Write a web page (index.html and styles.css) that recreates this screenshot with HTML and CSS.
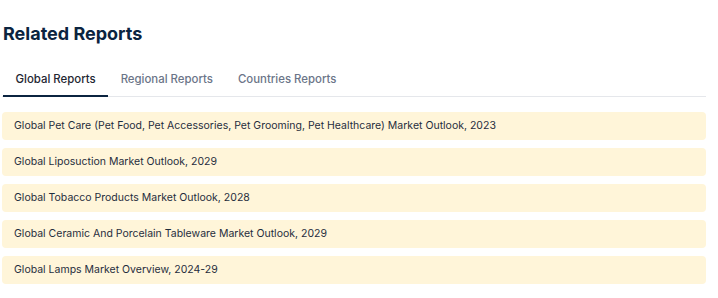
FILE: index.html
```html
<!DOCTYPE html>
<html lang="en">
<head>
    <meta charset="UTF-8">
    <meta name="viewport" content="width=device-width, initial-scale=1.0">
    <title>Related Reports</title>
    <link rel="stylesheet" href="styles.css">
</head>

<body>
    <div class="related">
        <h2 class="title">Related Reports</h2>

        <div class="tabs">
            <button class="tab active">Global Reports</button>
            <button class="tab">Regional Reports</button>
            <button class="tab">Countries Reports</button>
        </div>

        <ul class="reports">
            <li><a href="#">Global Pet Care (Pet Food, Pet Accessories, Pet Grooming, Pet Healthcare) Market Outlook, 2023</a></li>
            <li><a href="#">Global Liposuction Market Outlook, 2029</a></li>
            <li><a href="#">Global Tobacco Products Market Outlook, 2028</a></li>
            <li><a href="#">Global Ceramic And Porcelain Tableware Market Outlook, 2029</a></li>
            <li><a href="#">Global Lamps Market Overview, 2024-29</a></li>
        </ul>
    </div>
</body>
</html>
```

FILE: styles.css
```css
body {
    margin: 0;
    padding: 0;
    background-color: #fff;
    font-family: Inter, "Noto Sans", sans-serif;
}

.related {
    width: 704px;
    padding: 22px 0 0 2px;
}

.title {
    margin: 0 0 0 1px;
    font-size: 18px;
    line-height: 24px;
    font-weight: 700;
    color: #0b2440;
}

.tabs {
    display: flex;
    margin-top: 20px;
    border-bottom: 1px solid #e5e7eb;
}

.tab {
    background: none;
    border: none;
    border-bottom: 2px solid transparent;
    margin: 0 0 -1px 0;
    padding: 6px 12.5px 8px 12.5px;
    font-family: inherit;
    font-size: 11.4px;
    line-height: 15px;
    font-weight: 500;
    color: #6b7588;
    cursor: pointer;
}

.tab:first-child {
    margin-left: 1px;
}

.tab.active {
    color: #1f2733;
    border-bottom-color: #0b2440;
}

.reports {
    list-style: none;
    margin: 15px 0 0 0;
    padding: 0;
    display: flex;
    flex-direction: column;
    gap: 8px;
}

.reports li a {
    display: block;
    height: 28px;
    line-height: 28px;
    padding: 0 12px;
    border-radius: 4px;
    background-color: #fff5d9;
    color: #1f2d3d;
    font-size: 10.5px;
    text-decoration: none;
}
```
